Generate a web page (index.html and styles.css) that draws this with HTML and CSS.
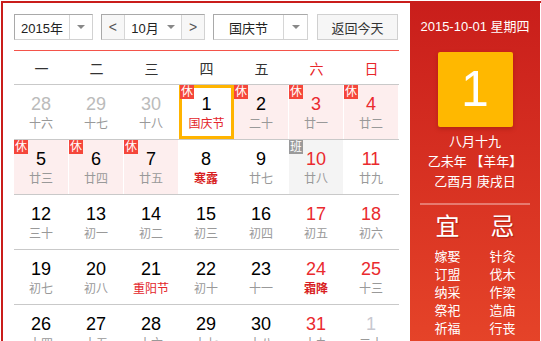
FILE: index.html
```html
<!DOCTYPE html>
<html lang="zh-CN">
<head>
  <meta charset="UTF-8">
  <title>万年历</title>
  <link rel="stylesheet" href="styles.css">
</head>
<body>
  <div class="frame">
    <div class="main">
      <div class="toolbar">
        <div class="select year-select">
          <span class="select-text">2015年</span>
          <span class="select-arrow"><i class="tri"></i></span>
        </div>
        <div class="month-group">
          <span class="month-btn">&lt;</span>
          <span class="month-text">10月 <i class="tri"></i></span>
          <span class="month-btn">&gt;</span>
        </div>
        <div class="select holiday-select">
          <span class="select-text">国庆节</span>
          <span class="select-arrow"><i class="tri"></i></span>
        </div>
        <button class="today-btn">返回今天</button>
      </div>

      <div class="weekdays">
        <span>一</span><span>二</span><span>三</span><span>四</span><span>五</span>
        <span class="weekend">六</span><span class="weekend">日</span>
      </div>

      <div class="week">
        <div class="day other"><b>28</b><em>十六</em></div>
        <div class="day other"><b>29</b><em>十七</em></div>
        <div class="day other"><b>30</b><em>十八</em></div>
        <div class="day today"><i class="tag">休</i><b>1</b><em class="fest">国庆节</em></div>
        <div class="day rest"><i class="tag">休</i><b>2</b><em>二十</em></div>
        <div class="day rest weekend"><i class="tag">休</i><b>3</b><em>廿一</em></div>
        <div class="day rest weekend"><i class="tag">休</i><b>4</b><em>廿二</em></div>
      </div>
      <div class="week">
        <div class="day rest"><i class="tag">休</i><b>5</b><em>廿三</em></div>
        <div class="day rest"><i class="tag">休</i><b>6</b><em>廿四</em></div>
        <div class="day rest"><i class="tag">休</i><b>7</b><em>廿五</em></div>
        <div class="day"><b>8</b><em class="term">寒露</em></div>
        <div class="day"><b>9</b><em>廿七</em></div>
        <div class="day work weekend"><i class="tag">班</i><b>10</b><em>廿八</em></div>
        <div class="day weekend"><b>11</b><em>廿九</em></div>
      </div>
      <div class="week">
        <div class="day"><b>12</b><em>三十</em></div>
        <div class="day"><b>13</b><em>初一</em></div>
        <div class="day"><b>14</b><em>初二</em></div>
        <div class="day"><b>15</b><em>初三</em></div>
        <div class="day"><b>16</b><em>初四</em></div>
        <div class="day weekend"><b>17</b><em>初五</em></div>
        <div class="day weekend"><b>18</b><em>初六</em></div>
      </div>
      <div class="week">
        <div class="day"><b>19</b><em>初七</em></div>
        <div class="day"><b>20</b><em>初八</em></div>
        <div class="day"><b>21</b><em class="fest">重阳节</em></div>
        <div class="day"><b>22</b><em>初十</em></div>
        <div class="day"><b>23</b><em>十一</em></div>
        <div class="day weekend"><b>24</b><em class="term">霜降</em></div>
        <div class="day weekend"><b>25</b><em>十三</em></div>
      </div>
      <div class="week">
        <div class="day"><b>26</b><em>十四</em></div>
        <div class="day"><b>27</b><em>十五</em></div>
        <div class="day"><b>28</b><em>十六</em></div>
        <div class="day"><b>29</b><em>十七</em></div>
        <div class="day"><b>30</b><em>十八</em></div>
        <div class="day weekend"><b>31</b><em>十九</em></div>
        <div class="day other"><b>1</b><em>二十</em></div>
      </div>
    </div>

    <div class="panel">
      <div class="panel-date">2015-10-01 星期四</div>
      <div class="big-day">1</div>
      <div class="lunar">
        <p>八月十九</p>
        <p>乙未年 【羊年】</p>
        <p>乙酉月 庚戌日</p>
      </div>
      <div class="panel-line"></div>
      <div class="almanac">
        <ul>
          <li class="head">宜</li>
          <li>嫁娶</li><li>订盟</li><li>纳采</li><li>祭祀</li><li>祈福</li>
        </ul>
        <ul>
          <li class="head">忌</li>
          <li>针灸</li><li>伐木</li><li>作梁</li><li>造庙</li><li>行丧</li>
        </ul>
      </div>
    </div>
  </div>
</body>
</html>
```

FILE: styles.css
```css
* {
  margin: 0;
  padding: 0;
  box-sizing: border-box;
}

body {
  font-family: 'Liberation Sans', 'Noto Sans CJK SC', sans-serif;
  background: #fff;
  color: #333;
  overflow: hidden;
}

.frame {
  margin: 1px 0 0 1px;
  border-top: 2px solid #c91d1b;
  border-left: 2px solid #c91d1b;
  display: flex;
  height: 400px;
}

/* Calendar side */
.main {
  width: 407px;
  padding: 11px;
}

.toolbar {
  display: flex;
  height: 26px;
  font-size: 13px;
}

.select {
  display: flex;
  border: 1px solid #d2d2d2;
  border-top-color: #a9a9a9;
  border-left-color: #a9a9a9;
  background: #fff;
}

.select-text {
  display: flex;
  align-items: center;
  justify-content: center;
  color: #222;
  border-right: 1px solid #d6d6d6;
}

.select-arrow {
  flex: 1;
  display: flex;
  align-items: center;
  justify-content: center;
}

.tri {
  display: inline-block;
  width: 0;
  height: 0;
  border-left: 4px solid transparent;
  border-right: 4px solid transparent;
  border-top: 4px solid #888;
}

.year-select { width: 79px; }
.year-select .select-text { width: 55px; }

.holiday-select { width: 95px; margin-left: 8px; }
.holiday-select .select-text { width: 70px; }

.month-group {
  display: flex;
  width: 104px;
  margin-left: 8px;
  border: 1px solid #d2d2d2;
  border-top-color: #a9a9a9;
  border-left-color: #a9a9a9;
}

.month-btn {
  width: 22px;
  display: flex;
  align-items: center;
  justify-content: center;
  background: #f7f7f7;
  color: #555;
  font-size: 14px;
}

.month-text {
  width: 59px;
  display: flex;
  align-items: center;
  justify-content: center;
  gap: 8px;
  color: #222;
  border-left: 1px solid #d6d6d6;
  border-right: 1px solid #d6d6d6;
  background: #fff;
}

.today-btn {
  width: 81px;
  margin-left: 9px;
  border: 1px solid #d0d0d0;
  background: #f6f6f6;
  font-family: inherit;
  font-size: 13px;
  color: #333;
}

.weekdays {
  display: grid;
  grid-template-columns: repeat(7, 55px);
  margin-top: 10px;
  border-top: 1px solid #f4544a;
  height: 34px;
  font-size: 14px;
  color: #333;
}

.weekdays span {
  display: flex;
  align-items: center;
  justify-content: center;
}

.weekdays .weekend { color: #e8262a; }

.week {
  display: grid;
  grid-template-columns: repeat(7, 55px);
  border-top: 1px solid #c9c9c9;
}

.day {
  position: relative;
  height: 54px;
  padding-top: 9px;
  border-right: 1px solid #fff;
  text-align: center;
}

.day b {
  display: block;
  font-weight: normal;
  font-size: 18px;
  line-height: 20px;
  color: #000;
}

.day em {
  display: block;
  margin-top: 2px;
  font-style: normal;
  font-size: 12px;
  line-height: 16px;
  color: #999;
}

.day.weekend b { color: #ea2a2e; }
.day.other b { color: #bbb; }
.day.other:last-child b { color: #c8c8d0; }

.day em.fest { color: #e3262b; }
.day em.term { color: #d81e23; font-weight: bold; }

.day.rest { background: #fdeeee; }
.day.work { background: #f4f4f4; }

.day.today {
  border: 3px solid #ffb400;
  padding-top: 6px;
}

.tag {
  position: absolute;
  top: 0;
  left: 0;
  width: 14px;
  height: 14px;
  font-style: normal;
  font-size: 12px;
  line-height: 14px;
  color: #fff;
  background: #f5463a;
  text-align: center;
}

.day.today .tag { top: -3px; left: -2px; }
.day.work .tag { background: #9a9a9a; }

/* Right panel */
.panel {
  width: 130px;
  background: linear-gradient(to bottom, #c91e1b, #ea4a2b);
  color: #fff;
  display: flex;
  flex-direction: column;
  align-items: center;
  padding-top: 15px;
}

.panel-date {
  font-size: 13px;
  line-height: 18px;
}

.big-day {
  width: 75px;
  height: 75px;
  margin-top: 16px;
  background: #ffb800;
  border-radius: 2px;
  box-shadow: 0 2px 4px rgba(120, 20, 0, 0.35);
  font-size: 50px;
  line-height: 75px;
  text-align: center;
}

.lunar {
  margin-top: 5px;
  text-align: center;
  font-size: 13px;
  line-height: 20px;
}

.panel-line {
  width: 110px;
  height: 2px;
  margin-top: 11px;
  background: rgba(255, 255, 255, 0.35);
}

.almanac {
  display: flex;
  gap: 11px;
  margin-top: 8px;
}

.almanac ul {
  list-style: none;
  width: 44px;
  text-align: center;
}

.almanac li {
  font-size: 13px;
  line-height: 18px;
}

.almanac li.head {
  font-size: 24px;
  line-height: 28px;
  margin-bottom: 7px;
  text-shadow: 1px 1px 1px rgba(90, 0, 0, 0.35);
}
```
